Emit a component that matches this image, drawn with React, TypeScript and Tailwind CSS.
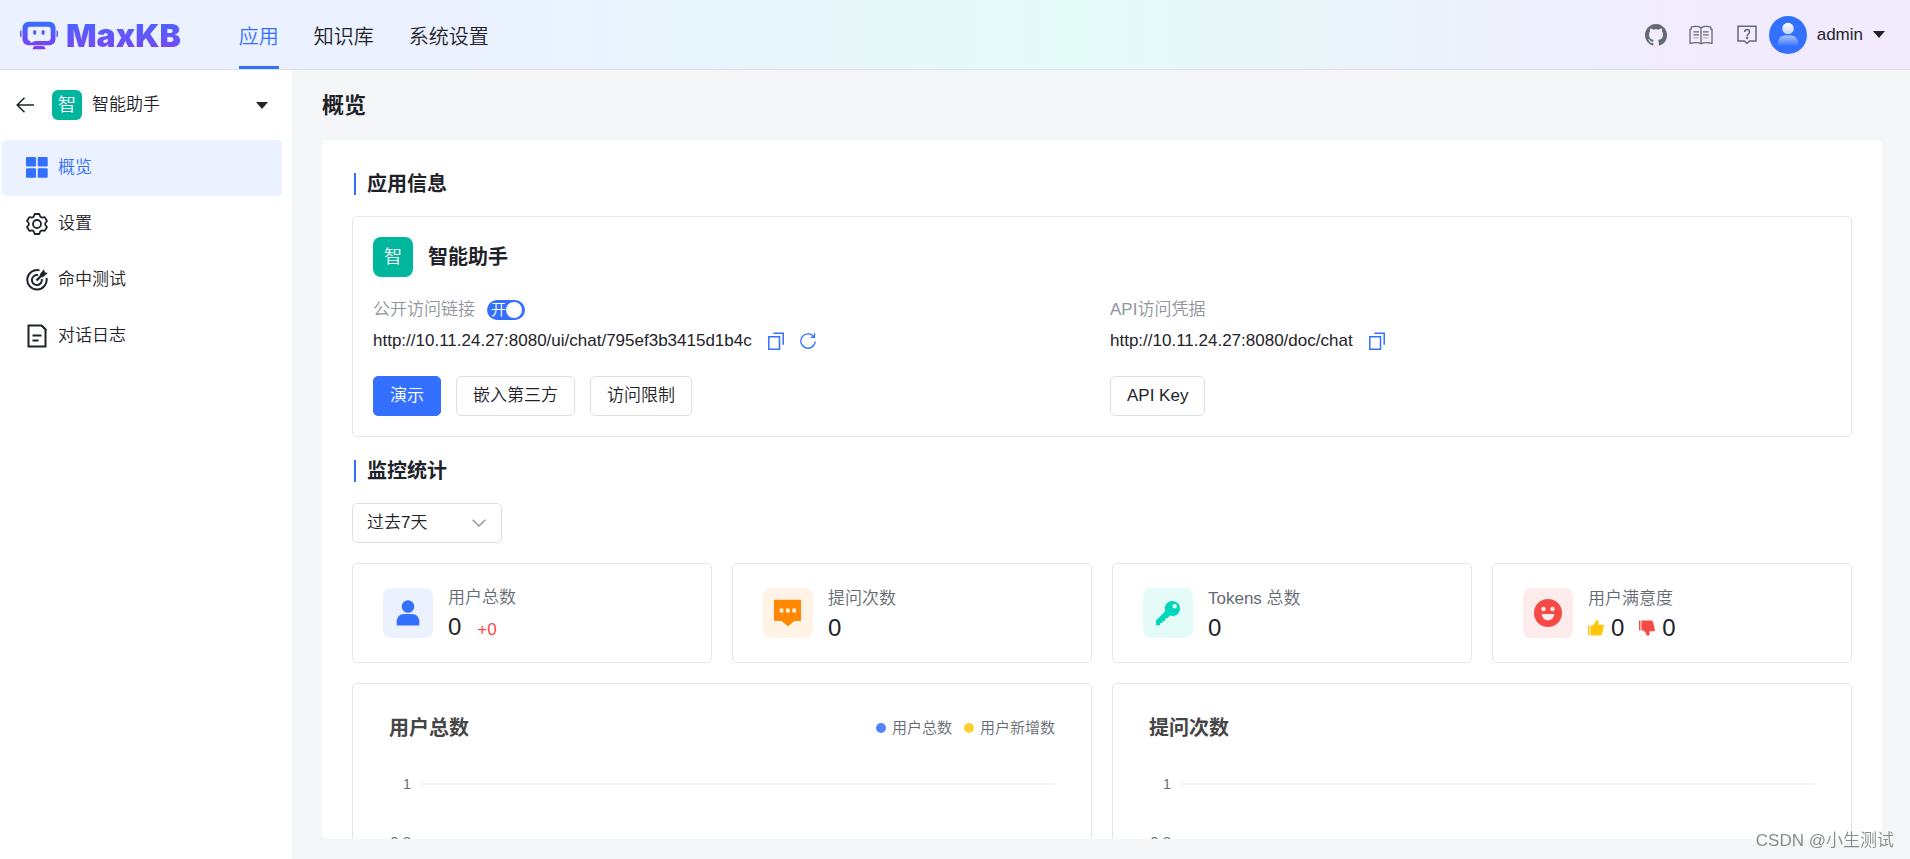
'use client';

import React, { useState } from 'react';

const navItems = ['应用', '知识库', '系统设置'];

const menuItems = [
  { name: '概览', icon: <GridIcon /> },
  { name: '设置', icon: <GearIcon /> },
  { name: '命中测试', icon: <TargetIcon /> },
  { name: '对话日志', icon: <LogIcon /> },
];

function Logo() {
  return (
    <svg width="38" height="30" viewBox="0 0 38 30" fill="none">
      <defs>
        <linearGradient id="logo" x1="0" y1="0" x2="0" y2="30" gradientUnits="userSpaceOnUse">
          <stop stopColor="#3370ff" />
          <stop offset="1" stopColor="#8a36f5" />
        </linearGradient>
      </defs>
      <rect x="2.500" y=".7" width="33" height="23.600" rx="6" fill="url(#logo)" />
      <path d="M0 11c0-1 .6-1.800 1.500-1.800v7C.6 16.200 0 15.400 0 14.400zM38 11c0-1-.6-1.800-1.500-1.800v7c.9 0 1.500-.8 1.500-1.800z" fill="url(#logo)" />
      <path d="M10 5.700h18.300a2.400 2.400 0 0 1 2.400 2.400v9.500a2.400 2.400 0 0 1-2.400 2.400H15l-4.600 2v-2H10a2.400 2.400 0 0 1-2.400-2.400V8.100A2.400 2.400 0 0 1 10 5.700z" fill="#ebf1ff" />
      <rect x="13.200" y="9" width="3" height="4.800" rx="1.500" fill="url(#logo)" />
      <rect x="21.600" y="9" width="3" height="4.800" rx="1.500" fill="url(#logo)" />
      <path d="M15.500 25h7c2 0 2.500 1.500 3 3.300h-13c.5-1.800 1-3.300 3-3.300z" fill="url(#logo)" />
    </svg>
  );
}

function GithubIcon() {
  return (
    <svg width="22" height="22" viewBox="0 0 16 16" fill="currentColor">
      <path d="M8 0C3.580 0 0 3.580 0 8c0 3.540 2.290 6.530 5.470 7.590.4.07.55-.17.55-.38 0-.19-.01-.82-.01-1.490-2.010.37-2.530-.49-2.690-.94-.09-.23-.48-.94-.82-1.130-.28-.15-.68-.52-.01-.53.63-.01 1.080.58 1.230.82.72 1.210 1.870.87 2.330.66.07-.52.28-.87.51-1.070-1.780-.2-3.640-.89-3.640-3.950 0-.87.31-1.590.82-2.150-.08-.2-.36-1.020.08-2.120 0 0 .67-.21 2.200.82.64-.18 1.320-.27 2-.27s1.360.09 2 .27c1.530-1.040 2.200-.82 2.200-.82.44 1.100.16 1.920.08 2.120.51.56.82 1.270.82 2.150 0 3.070-1.870 3.750-3.650 3.950.29.25.54.73.54 1.480 0 1.070-.01 1.930-.01 2.200 0 .21.15.46.55.38A8.010 8.010 0 0016 8c0-4.420-3.580-8-8-8z" />
    </svg>
  );
}

function BookIcon() {
  return (
    <svg width="24" height="20" viewBox="0 0 24 20" fill="none" stroke="currentColor" strokeWidth="1.300">
      <path d="M12 3C10.500 1.200 5.500 1 2.200 2.200v2L1 4.500v13.800c4-.8 8.500-.9 11 .4 2.500-1.300 7-1.200 11-.4V4.500l-1.200-.3v-2C18.500 1 13.500 1.200 12 3zM12 3v15.500" />
      <path d="M4.300 6.800h5.700M4.300 9.800h5.700M14 6.800h5.700M14 9.800h5.700" />
      <path d="M4.300 12.800h5.700M14 12.800h5.700" opacity=".4" />
    </svg>
  );
}

function QuestionIcon() {
  return (
    <svg width="20" height="20" viewBox="0 0 20 20" fill="none" stroke="currentColor" strokeWidth="1.500">
      <path d="M1 1.200h18V16h-6.500L10 18.500 7.500 16H1z" />
      <path d="M7.700 7c0-3.200 4.800-3.200 4.800 0 0 2-2.400 2-2.400 4.200" />
      <circle cx="10.100" cy="13" r=".5" />
    </svg>
  );
}

function AvatarIcon() {
  return (
    <svg width="38" height="38" viewBox="0 0 38 38">
      <defs>
        <linearGradient id="head" x1="0" y1="0" x2="0" y2="1">
          <stop stopColor="#fff" />
          <stop offset="1" stopColor="#c5d5ff" />
        </linearGradient>
        <linearGradient id="body" x1="0" y1="0" x2="0" y2="1">
          <stop stopColor="#a9c2ff" />
          <stop offset="1" stopColor="#3f78ff" />
        </linearGradient>
      </defs>
      <circle cx="19" cy="19" r="19" fill="#3370ff" />
      <circle cx="19" cy="12.500" r="5.700" fill="url(#head)" />
      <path d="M9 29.500V27c0-4 2.500-7.500 6.500-7.500h7c4 0 6.500 3.500 6.500 7.500v2.500z" fill="url(#body)" />
    </svg>
  );
}

function CaretIcon() {
  return (
    <svg width="12" height="7" viewBox="0 0 12 7" fill="#1f2329">
      <path d="M0 0h12L6 7z" />
    </svg>
  );
}

function BackIcon() {
  return (
    <svg width="18" height="16" viewBox="0 0 18 16" fill="none" stroke="#1f2329" strokeWidth="1.500">
      <path d="M8.500 .7 1.200 8l7.300 7.300M1.200 8H18" />
    </svg>
  );
}

function GridIcon() {
  return (
    <svg width="22" height="22" viewBox="0 0 22 22" fill="currentColor">
      <rect x="0" y="0" width="10" height="9.500" rx="1" />
      <rect x="11.700" y="0" width="10" height="9.500" rx="1" />
      <rect x="0" y="11.300" width="10" height="9.500" rx="1" />
      <rect x="11.700" y="11.300" width="10" height="9.500" rx="1" />
    </svg>
  );
}

function GearIcon() {
  return (
    <svg width="22" height="22" viewBox="0 0 22 22" fill="none" stroke="currentColor" strokeWidth="1.800" strokeLinejoin="round">
      <path d="M8.700 1h4.600l1 2.700 1.500.9 2.900-.5 2.300 3.900L19.300 10v2l1.700 2-2.300 3.900-2.900-.5-1.500.9-1 2.700H8.700l-1-2.700-1.500-.9-2.900.5L1 14l1.700-2v-2L1 8l2.300-3.900 2.900.5 1.500-.9z" />
      <circle cx="11" cy="11" r="4" />
    </svg>
  );
}

function TargetIcon() {
  return (
    <svg width="22" height="22" viewBox="0 0 22 22" fill="none" stroke="currentColor" strokeWidth="2">
      <path d="M13.500 1.400A9.700 9.700 0 1 0 20.500 9" />
      <path d="M12 6.100A5 5 0 1 0 15.800 10" />
      <path d="M10.500 11.500 17 5" strokeWidth="2.400" />
      <path d="M14.300 5 17.800.8l.8 2.700 2.700.8-4.200 3.500h-2.800z" fill="currentColor" strokeWidth=".6" />
    </svg>
  );
}

function LogIcon() {
  return (
    <svg width="22" height="24" viewBox="0 0 22 24" fill="none" stroke="currentColor" strokeWidth="2">
      <path d="M2.500 1.500h13l4 4v17h-17z" />
      <path d="M14.500 1h1.800L20.500 5.200V7z" fill="currentColor" strokeWidth="0" />
      <path d="M6.500 11.500h9M6.500 16.500h6" />
    </svg>
  );
}

function CopyIcon() {
  return (
    <svg width="16" height="18" viewBox="0 0 16 18" fill="none" stroke="#3370ff" strokeWidth="1.500">
      <path d="M.8 4.700h10.700v12.500H.8zM5.500 1.200h9.700v11.500" />
    </svg>
  );
}

function RefreshIcon() {
  return (
    <svg width="16" height="18" viewBox="0 0 16 18" fill="none" stroke="#3370ff" strokeWidth="1.300">
      <path d="M14 5A7.200 7.200 0 1 0 15.200 9.500M14.500 1v4.300h-4" />
    </svg>
  );
}

function ThumbIcon({ down }: { down?: boolean }) {
  return (
    <svg
      width="16"
      height="16"
      viewBox="0 0 16 16"
      className={down ? '-scale-y-100 text-[#f54a45]' : 'text-[#ffc60a]'}
      fill="currentColor"
    >
      <path d="M0 5.500h1.500V15.500H0zM2.500 5.500h2c1.300-.8 2.400-2.300 3-4.500.4-1.200 2.700-.9 3 .8.2 1 .1 1.900-.2 2.900h4.200c.9 0 1.500.8 1.300 1.700l-1.800 7.600c-.2.900-1 1.500-1.900 1.500H2.500z" />
    </svg>
  );
}

function Avatar({ className }: { className: string }) {
  return (
    <span className={`flex shrink-0 items-center justify-center bg-[#00b69d] text-white ${className}`}>
      智
    </span>
  );
}

function SectionTitle({ children }: { children: React.ReactNode }) {
  return (
    <h2 className="mb-[18px] flex h-7 items-center gap-[11px] text-xl font-bold text-[#1f2329]">
      <span className="ml-0.5 h-[22px] w-0.5 bg-[#3370ff]" />
      {children}
    </h2>
  );
}

function StatCard({
  label,
  iconBg,
  icon,
  children,
}: {
  label: string;
  iconBg: string;
  icon: React.ReactNode;
  children: React.ReactNode;
}) {
  return (
    <div className="flex h-[100px] items-center gap-[15px] rounded-[5px] border border-[#e4e5ee] px-[30px]">
      <div className={`size-[50px] shrink-0 rounded-lg ${iconBg}`}>
        <svg width="50" height="50" viewBox="0 0 50 50">
          {icon}
        </svg>
      </div>
      <div className="pt-1">
        <p className="leading-[26px] text-[#646a73]">{label}</p>
        <div className="flex items-baseline text-2xl leading-8 text-[#1f2329]">{children}</div>
      </div>
    </div>
  );
}

function ChartCard({ title, legend }: { title: string; legend?: { name: string; color: string }[] }) {
  return (
    <div className="h-[320px] rounded-[5px] border border-[#e4e5ee] px-9 pt-[30px]">
      <div className="flex h-7 items-center justify-between">
        <h3 className="text-xl font-bold text-[#464646]">{title}</h3>
        <ul className="flex gap-3 text-[15px] leading-5 text-[#646a73]">
          {legend?.map((item) => (
            <li key={item.name} className="flex items-center gap-1.5">
              <span className={`size-2.5 rounded-full ${item.color}`} />
              {item.name}
            </li>
          ))}
        </ul>
      </div>
      <div className="mt-8 flex flex-col gap-[38px] text-[15px] leading-5 text-[#6e7079]">
        {['1', '0.8'].map((tick) => (
          <div key={tick} className="flex items-center gap-2.5">
            <span className="w-[22px] text-right">{tick}</span>
            <span className="h-0.5 flex-1 bg-[#f4f5f7]" />
          </div>
        ))}
      </div>
    </div>
  );
}

const button =
  'h-10 rounded-[5px] border border-[#dee0e3] bg-white px-4 text-[#1f2329]';

export default function App() {
  const [active, setActive] = useState('概览');
  const [isPublic, setIsPublic] = useState(true);
  const [range, setRange] = useState('7');

  return (
    <div className="flex h-screen flex-col overflow-hidden bg-[#f5f6f7] font-['Liberation_Sans','Noto_Sans_CJK_SC',sans-serif] text-[17px] font-[350] text-[#1f2329]">
      <header className="flex h-[70px] shrink-0 items-center border-b border-[#dddfe8] bg-[linear-gradient(90deg,#ebf1ff_24%,#e5fbf8_56%,#f2ebfe_90%)] pr-[25px] pl-5">
        <a href="#" className="flex items-center gap-2 pt-0.5">
          <Logo />
          <span className="bg-linear-to-b from-[#3f68ff] to-[#7a40f5] bg-clip-text font-['Inter',sans-serif] text-[32px] leading-9 font-black text-transparent">
            MaxKB
          </span>
        </a>
        <nav className="ml-[58px] flex h-full gap-[35px] text-xl">
          {navItems.map((item, i) => (
            <a
              key={item}
              href="#"
              className={`flex items-center border-b-3 pt-2 ${
                i === 0 ? 'border-[#3370ff] text-[#3370ff]' : 'border-transparent'
              }`}
            >
              {item}
            </a>
          ))}
        </nav>
        <div className="ml-auto flex items-center text-[#646a73]">
          <a href="#" aria-label="GitHub" className="mr-[22px]">
            <GithubIcon />
          </a>
          <a href="#" aria-label="文档" className="mr-6">
            <BookIcon />
          </a>
          <a href="#" aria-label="帮助" className="mr-3">
            <QuestionIcon />
          </a>
          <button className="flex items-center gap-2.5 text-[#1f2329]">
            <AvatarIcon />
            admin
            <CaretIcon />
          </button>
        </div>
      </header>

      <div className="flex min-h-0 flex-1">
        <aside className="w-[292px] shrink-0 bg-white">
          <div className="flex h-[70px] items-center pr-6 pl-4">
            <button aria-label="返回">
              <BackIcon />
            </button>
            <button className="ml-[18px] flex flex-1 items-center gap-2.5">
              <Avatar className="size-[30px] rounded-md text-lg" />
              智能助手
              <span className="ml-auto">
                <CaretIcon />
              </span>
            </button>
          </div>
          <ul className="pr-2.5 pl-0.5">
            {menuItems.map((item) => (
              <li key={item.name}>
                <button
                  onClick={() => setActive(item.name)}
                  className={`flex h-14 w-full items-center gap-2.5 rounded-[5px] px-6 ${
                    active === item.name ? 'bg-[#ebf1ff] text-[#3370ff]' : 'text-[#1f2329]'
                  }`}
                >
                  {item.icon}
                  {item.name}
                </button>
              </li>
            ))}
          </ul>
        </aside>

        <main className="flex min-w-0 flex-1 flex-col pr-7 pb-5 pl-[30px]">
          <h1 className="flex h-[70px] shrink-0 items-center text-[22px] font-bold">概览</h1>
          <div className="min-h-0 flex-1 overflow-hidden rounded-[5px] bg-white p-[30px]">
            <SectionTitle>应用信息</SectionTitle>
            <section className="rounded-[5px] border border-[#e4e5ee] p-5">
              <div className="flex items-center gap-[15px]">
                <Avatar className="size-10 rounded-lg text-lg" />
                <h3 className="text-xl font-bold">智能助手</h3>
              </div>
              <div className="mt-5 grid grid-cols-2 gap-4">
                <div>
                  <div className="flex h-[26px] items-center gap-3 text-[#8f959e]">
                    <span id="public-link">公开访问链接</span>
                    <label className="flex h-5 w-[38px] items-center rounded-full bg-[#3370ff] pr-[3px] pl-1 text-[15px] text-white">
                      <input
                        type="checkbox"
                        role="switch"
                        aria-labelledby="public-link"
                        className="sr-only"
                        checked={isPublic}
                        onChange={(e) => setIsPublic(e.target.checked)}
                      />
                      {isPublic ? '开' : '关'}
                      <span className="size-4 shrink-0 rounded-full bg-white" />
                    </label>
                  </div>
                  <div className="mt-[5px] flex h-[26px] items-center">
                    <span>http://10.11.24.27:8080/ui/chat/795ef3b3415d1b4c</span>
                    <button aria-label="复制" className="ml-4">
                      <CopyIcon />
                    </button>
                    <button aria-label="刷新" className="ml-4">
                      <RefreshIcon />
                    </button>
                  </div>
                  <div className="mt-[22px] flex gap-[15px]">
                    <button className="h-10 rounded-[5px] border border-[#3370ff] bg-[#3370ff] px-4 text-white">
                      演示
                    </button>
                    <button className={button}>嵌入第三方</button>
                    <button className={button}>访问限制</button>
                  </div>
                </div>
                <div>
                  <div className="flex h-[26px] items-center text-[#8f959e]">API访问凭据</div>
                  <div className="mt-[5px] flex h-[26px] items-center">
                    <span>http://10.11.24.27:8080/doc/chat</span>
                    <button aria-label="复制" className="ml-4">
                      <CopyIcon />
                    </button>
                  </div>
                  <div className="mt-[22px] flex">
                    <button className={button}>API Key</button>
                  </div>
                </div>
              </div>
            </section>

            <div className="mt-5">
              <SectionTitle>监控统计</SectionTitle>
            </div>
            <div className="relative w-[150px]">
              <select
                aria-label="时间范围"
                value={range}
                onChange={(e) => setRange(e.target.value)}
                className="h-10 w-full appearance-none rounded-[5px] border border-[#dcdfe6] bg-white pl-3.5"
              >
                <option value="7">过去7天</option>
                <option value="30">过去30天</option>
              </select>
              <svg
                className="pointer-events-none absolute top-4 right-4"
                width="14"
                height="8"
                viewBox="0 0 14 8"
                fill="none"
                stroke="#8f959e"
                strokeWidth="1.400"
              >
                <path d="M.7.7 7 7 13.300.7" />
              </svg>
            </div>

            <div className="mt-5 grid grid-cols-4 gap-5">
              <StatCard
                label="用户总数"
                iconBg="bg-[#ebf1ff]"
                icon={
                  <g fill="#3370ff">
                    <circle cx="25" cy="18.500" r="6.300" />
                    <path d="M13.700 37.500V34c0-4.500 2.800-8 7.300-8h8c4.500 0 7.300 3.500 7.300 8v3.500z" />
                  </g>
                }
              >
                0<span className="ml-4 text-[17px] text-[#f54a45]">+0</span>
              </StatCard>
              <StatCard
                label="提问次数"
                iconBg="bg-[#fff3e5]"
                icon={
                  <>
                    <path d="M12 11.700h25a1 1 0 0 1 1 1V32a1 1 0 0 1-1 1h-5.500L25 38.300 18.500 33H12a1 1 0 0 1-1-1V12.700a1 1 0 0 1 1-1z" fill="#ff8800" />
                    <path d="M16.700 20.500h3.600v4h-3.600zM23.100 20.500h3.600v4h-3.600zM29.400 20.500h3.600v4h-3.600z" fill="#fff3e5" />
                  </>
                }
              >
                0
              </StatCard>
              <StatCard
                label="Tokens 总数"
                iconBg="bg-[#e5fbf8]"
                icon={
                  <>
                    <path d="M29.500 13a7.500 7.500 0 1 1-2.300 14.600L24 30.500h-2V33h-2.500v2H17v2.200h-4V32.500l9.300-9.300A7.500 7.500 0 0 1 29.500 13z" fill="#00d6b9" />
                    <circle cx="31.700" cy="18.300" r="2.200" fill="#e5fbf8" />
                  </>
                }
              >
                0
              </StatCard>
              <StatCard
                label="用户满意度"
                iconBg="bg-[#feecec]"
                icon={
                  <>
                    <circle cx="25" cy="25" r="14" fill="#f54a45" />
                    <g fill="#feecec">
                      <circle cx="20.500" cy="21" r="2.200" />
                      <circle cx="29.500" cy="21" r="2.200" />
                      <path d="M18.700 26h12.600a6.300 6.300 0 0 1-12.600 0z" />
                    </g>
                  </>
                }
              >
                <ThumbIcon />
                <span className="mr-[15px] ml-[7px]">0</span>
                <ThumbIcon down />
                <span className="ml-[7px]">0</span>
              </StatCard>
            </div>

            <div className="mt-5 grid grid-cols-2 gap-5">
              <ChartCard
                title="用户总数"
                legend={[
                  { name: '用户总数', color: 'bg-[#5383ff]' },
                  { name: '用户新增数', color: 'bg-[#ffcf33]' },
                ]}
              />
              <ChartCard title="提问次数" />
            </div>
          </div>
        </main>
      </div>

      <p className="fixed right-4 bottom-1.5 leading-6 text-[#888b90]">CSDN @小生测试</p>
    </div>
  );
}
